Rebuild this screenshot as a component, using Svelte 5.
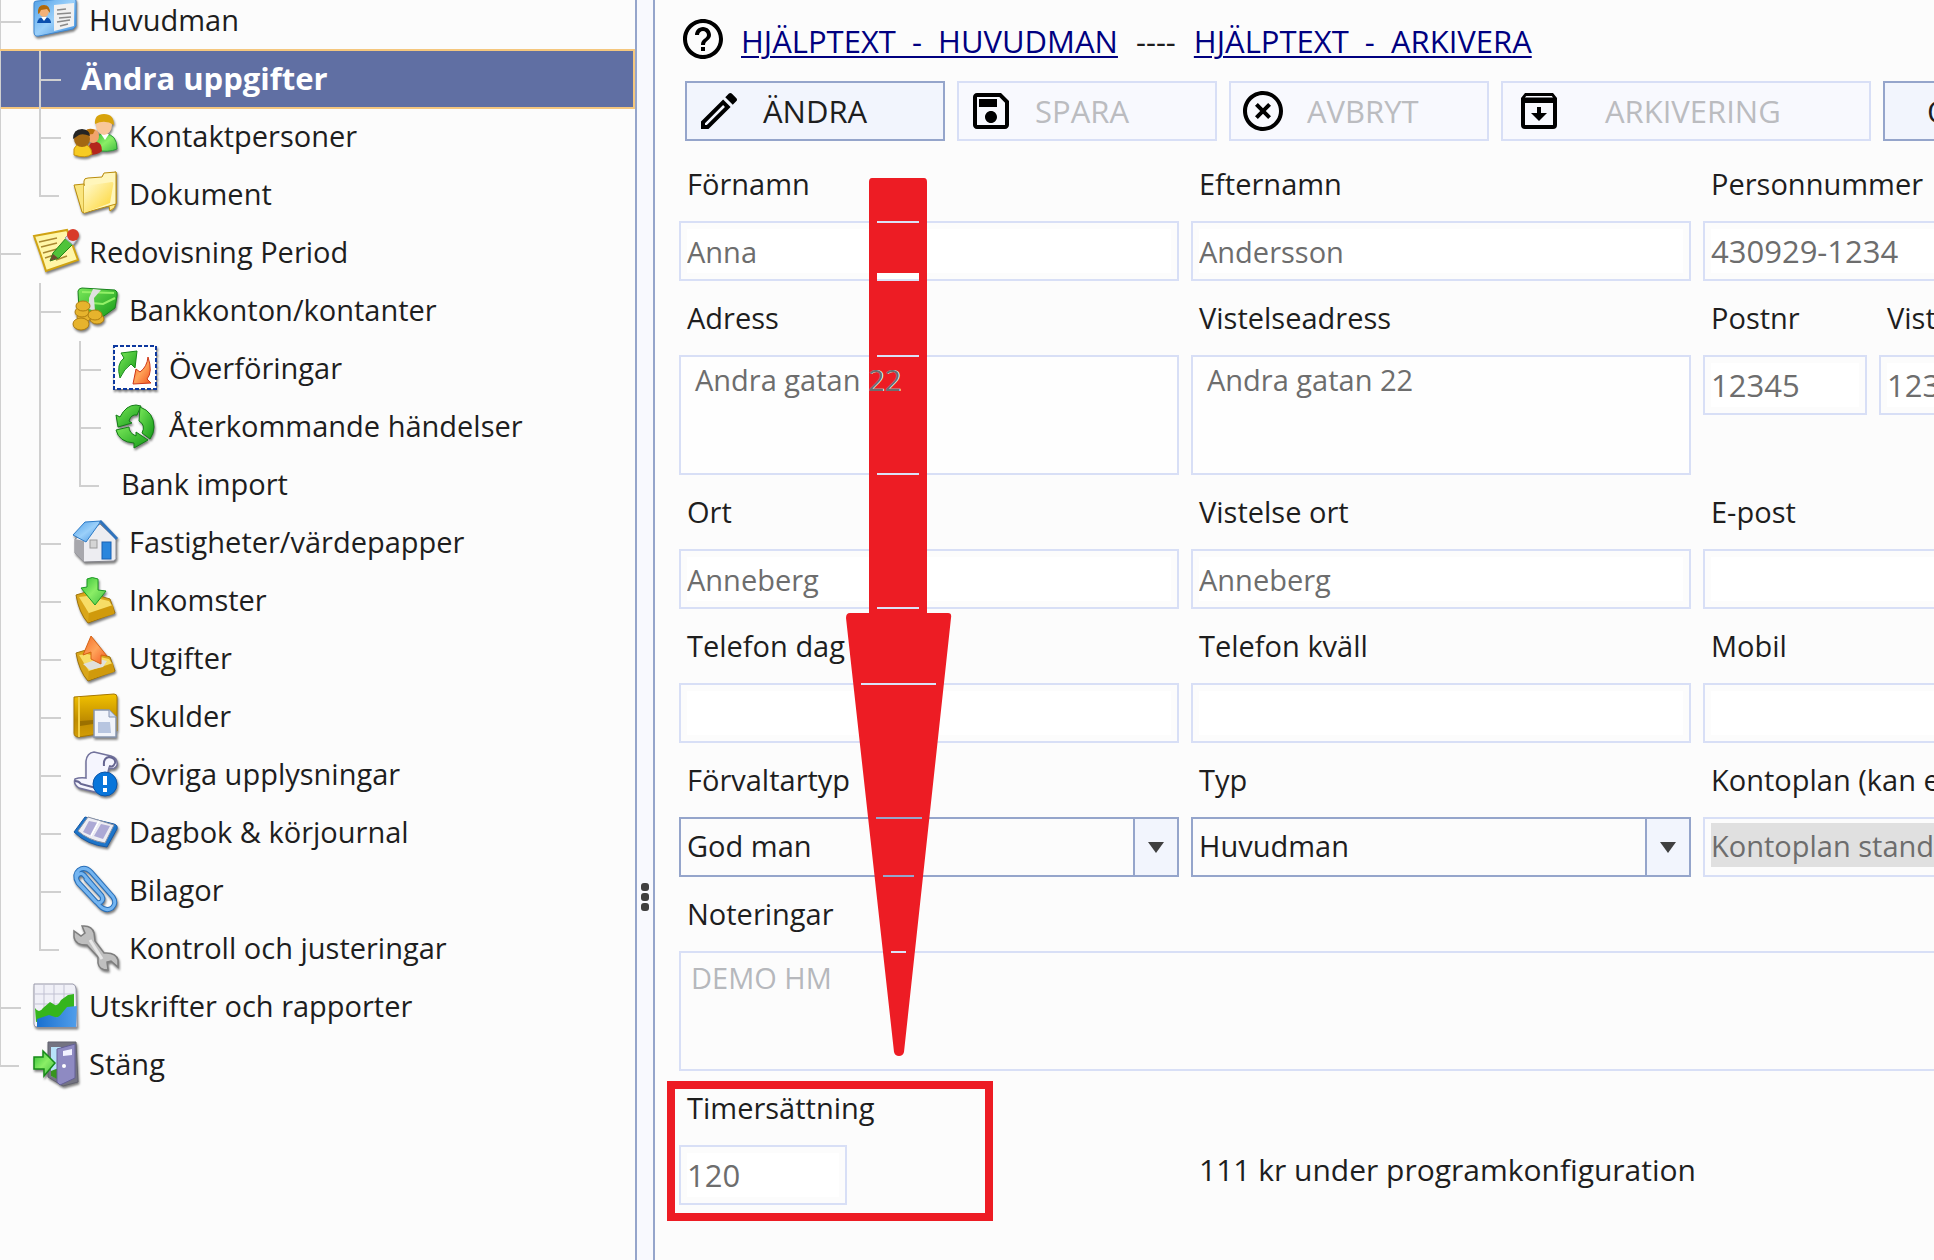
<script lang="ts">
  type Item = { text: string; guides: string[]; icon?: string; selected?: boolean };

  // guides: p = line passing through, t = branch, e = last branch
  const items: Item[] = [
    { text: 'Huvudman', guides: ['t'], icon: 'card' },
    { text: 'Ändra uppgifter', guides: ['p', 't'], selected: true },
    { text: 'Kontaktpersoner', guides: ['p', 't'], icon: 'people' },
    { text: 'Dokument', guides: ['p', 'e'], icon: 'folder' },
    { text: 'Redovisning Period', guides: ['t'], icon: 'note' },
    { text: 'Bankkonton/kontanter', guides: ['p', 't'], icon: 'money' },
    { text: 'Överföringar', guides: ['p', 'p', 't'], icon: 'transfer' },
    { text: 'Återkommande händelser', guides: ['p', 'p', 't'], icon: 'recycle' },
    { text: 'Bank import', guides: ['p', 'p', 'e'] },
    { text: 'Fastigheter/värdepapper', guides: ['p', 't'], icon: 'house' },
    { text: 'Inkomster', guides: ['p', 't'], icon: 'inbox' },
    { text: 'Utgifter', guides: ['p', 't'], icon: 'outbox' },
    { text: 'Skulder', guides: ['p', 't'], icon: 'binder' },
    { text: 'Övriga upplysningar', guides: ['p', 't'], icon: 'scroll' },
    { text: 'Dagbok & körjournal', guides: ['p', 't'], icon: 'book' },
    { text: 'Bilagor', guides: ['p', 't'], icon: 'clip' },
    { text: 'Kontroll och justeringar', guides: ['p', 'e'], icon: 'wrench' },
    { text: 'Utskrifter och rapporter', guides: ['t'], icon: 'chart' },
    { text: 'Stäng', guides: ['e'], icon: 'door' }
  ];
</script>

{#snippet treeIcon(name: string)}
  <svg class="tree-icon" viewBox="0 0 46 46" aria-hidden="true">
    {#if name === 'card'}
      <path d="M1 6Q1 4 4 4L40 1Q43 1 43 4V29L40 32L6 39Q1 40 1 35Z" fill="url(#g-blue)" stroke="#3d86d0" />
      <path d="M21 8L41 6V29L21 34Z" fill="#f1f1f1" />
      <path d="M24 13l9-1M24 17l14-1M26 21l12-1M24 25l13-2M27 29l8-2" stroke="#8a8a8a" stroke-width="1.6" />
      <path d="M4 26q1-6 7-6 6 0 7 5v1z" fill="#0b4fae" />
      <path d="M8 20l3 4 3-4z" fill="#fff" />
      <ellipse cx="11" cy="14" rx="5" ry="6" fill="#f3b178" />
      <path d="M5 17q-1-9 6-9 6 0 6 8l-3-4-6 1q-1 3-3 4z" fill="#b0690c" />
    {:else if name === 'people'}
      <path d="M21 37V28q1-7 11-7 12 0 12 15-8 4-23 1z" fill="url(#g-green2)" stroke="#2b9a3b" />
      <path d="M28 21l4 6 4-6z" fill="#fff" />
      <ellipse cx="31" cy="12" rx="8" ry="10" fill="#f9c79a" />
      <path d="M22 11q-1-10 9-10t10 11q-9-6-19-1z" fill="#d8a30c" />
      <path d="M16 42v-9q2-5 8-4 5 1 5 9-4 4-13 4z" fill="#b3261c" />
      <ellipse cx="20" cy="23" rx="6" ry="7" fill="#f2a46c" />
      <path d="M12 18q4-4 10-1l-2 4-8 1z" fill="#b8730d" />
      <path d="M1 42v-6q2-5 8-5 9 0 10 10-6 5-18 1z" fill="#f7cb22" stroke="#c89208" />
      <ellipse cx="9" cy="26" rx="8" ry="8" fill="#a36712" />
      <path d="M0 26q0-10 9-10 8 1 8 7-7-3-11-1z" fill="#242424" />
    {:else if name === 'folder'}
      <path d="M30 7V4l13-3v31q0 5-6 8z" fill="#ffeb88" stroke="#b98c0c" />
      <path d="M11 10q0-3 4-3l14-1 2-4 12-1v32L11 42z" fill="#fff6bb" stroke="#b98c0c" />
      <path d="M1 14l10-1v29L9 41z" fill="#fae57e" stroke="#b98c0c" />
      <path d="M11 15l28-4q2 0 1 4l-3 17-26 10z" fill="url(#g-yellow)" />
    {:else if name === 'note'}
      <path d="M1 7L34 1L45 31L13 42Q8 26 1 7Z" fill="#fff6a8" stroke="#d0a312" stroke-width="2" />
      <path d="M6 13l18-4M8 18l16-4M10 24l14-4M12 29l9-3M23 31l11-4" stroke="#a98830" stroke-width="1.5" />
      <path d="M17 32l3-8L34 8l7 6L26 29z" fill="#50c33a" stroke="#228518" />
      <path d="M17 32l3-7 5 4z" fill="#6d4b2f" />
      <path d="M32 9l4-4 8 6-4 5z" fill="#d9dde7" stroke="#9a9eac" />
      <ellipse cx="40" cy="6" rx="6" ry="6" fill="#d83a28" />
    {:else if name === 'money'}
      <path d="M5 4q1-3 4-3l33 2q3 1 2 6l-2 12-14 10L6 23z" fill="url(#g-green)" stroke="#19831d" />
      <path d="M9 5l32 1M8 15l22 2 12-6" stroke="#93f067" stroke-width="2" fill="none" />
      <path d="M20 2l8 1-7 8 1 13-6-2V11z" fill="#e0e0e0" />
      <g fill="#e6b32d" stroke="#ad7c10">
        <ellipse cx="11" cy="30" rx="7" ry="5" /><ellipse cx="9" cy="25" rx="7" ry="5" /><ellipse cx="10" cy="19" rx="7" ry="5" />
        <ellipse cx="24" cy="32" rx="7" ry="5" /><ellipse cx="22" cy="28" rx="7" ry="5" /><ellipse cx="8" cy="37" rx="8" ry="6" />
      </g>
    {:else if name === 'transfer'}
      <rect x="1" y="1" width="42" height="43" fill="#fff" stroke="#0d389f" stroke-width="2" stroke-dasharray="4 2" />
      <path d="M7 33q-4-14 4-20L8 8l16-2-2 17-4-4Q11 24 7 33z" fill="url(#g-green)" stroke="#178a19" />
      <path d="M35 12q5 15-1 22l4 4-18 1 3-15 4 3Q34 22 35 12z" fill="url(#g-orange)" stroke="#cf3718" />
    {:else if name === 'recycle'}
      <g fill="url(#g-green)" stroke="#137b17">
        <path d="M3 12l4 2Q13 2 23 2l5 1-4 9q-6-1-8 6l3 2-14 4z" />
        <path d="M27 4q14 5 14 20 0 6-4 12l-8-6q4-8-3-12z" />
        <path d="M3 27l13-3q0 6 7 9v-4l12 8-14 8v-5Q6 39 3 27z" />
      </g>
    {:else if name === 'house'}
      <path d="M2 20v14l9 9 30-1q3-2 2-6V20L27 5z" fill="#ededf1" stroke="#85858c" />
      <path d="M2 20v14l9 9V22z" fill="#a7a7ac" />
      <path d="M0 16L12 3l16-1L13 23z" fill="url(#g-blue)" stroke="#2c7ac6" />
      <path d="M27 2l17 18" stroke="#2f73bd" stroke-width="3" />
      <rect x="17" y="21" width="7" height="8" fill="#d5d5d5" stroke="#9b9b9b" />
      <rect x="29" y="23" width="9" height="17" fill="#2a86dd" stroke="#1861b3" />
    {:else if name === 'inbox' || name === 'outbox'}
      <path d="M3 18l10-3 24 7 5 14-27 10Q6 36 3 18z" fill="#d9a61a" stroke="#9e730b" />
      <path d="M6 20l8-1 22 5 4 6-23 8z" fill="#f7dd67" />
      <path d="M16 36l24-8 1 9-26 8z" fill="#d09a0c" />
      {#if name === 'inbox'}
        <path d="M14 2q5-3 11 0v11l8 1-11 14L8 11l6-1z" fill="url(#g-green2)" stroke="#1d9a25" />
      {:else}
        <path d="M10 29l16-5 8 2-4 6-13 3z" fill="#e0e0dc" />
        <path d="M18 1L34 21l-6-1v9l-10-5V17l-8 3z" fill="url(#g-orange)" stroke="#d66313" />
      {/if}
    {:else if name === 'binder'}
      <path d="M1 4l40-3q3 0 3 3v34l-38 6q-5 0-5-4z" fill="url(#g-gold)" stroke="#a77800" />
      <path d="M6 4v40" stroke="#f3cf45" stroke-width="2" />
      <path d="M7 28l13-1v4L7 33z" fill="#9b7000" />
      <path d="M21 17h15l7 7v20H21z" fill="#f1f4fb" stroke="#8795b0" stroke-width="1.5" />
      <path d="M25 29h12l1 11H25z" fill="#b7c5e0" />
      <path d="M36 17v7h7" fill="#d4dff2" stroke="#8795b0" />
    {:else if name === 'scroll'}
      <path d="M2 28q5-2 11-1V10q1-8 8-9l17 4q7 2 6 9-2 5-8 3l-3 12-3 14-24-6q-6-4-4-9z" fill="#f5f5fe" stroke="#72729c" stroke-width="1.5" />
      <path d="M31 15q-1-8 5-9 7 1 6 6-2 5-6 3M2 30q4 0 6 3l15 4" fill="none" stroke="#656591" stroke-width="2" />
      <circle cx="32" cy="33" r="12" fill="#0875da" stroke="#0b55a8" />
      <path d="M32 25v9M32 37v4" stroke="#fff" stroke-width="4" />
    {:else if name === 'book'}
      <path d="M1 23L12 8l29 7q4 1 3 5l-10 18q-20-2-33-15z" fill="#1d75c9" stroke="#1657a2" />
      <path d="M5 22L15 8l26 8-9 18Q15 31 5 22z" fill="#ededf3" stroke="#8b92a4" />
      <path d="M16 12l10 2-7 13-9-4zM28 15l9 2-7 13-9-3z" fill="#aca9d5" />
      <path d="M26 12l-8 15" stroke="#fff" stroke-width="2" />
    {:else if name === 'clip'}
      <path d="M29 29L11 8q-3-3-6 0-3 3 0 7l22 24q6 6 12 2 5-5 1-11L18 5Q12-1 6 3q-6 5-1 13l18 19q4 2 6-1 2-3-1-6L13 12" fill="none" stroke="#286fb9" stroke-width="5" stroke-linecap="round" />
      <path d="M29 29L11 8q-3-3-6 0-3 3 0 7l22 24q6 6 12 2 5-5 1-11L18 5Q12-1 6 3q-6 5-1 13l18 19q4 2 6-1 2-3-1-6L13 12" fill="none" stroke="#74b5f1" stroke-width="3" stroke-linecap="round" />
    {:else if name === 'wrench'}
      <path d="M9 1q10-1 12 7l1 8 9 12q12-1 14 7v7l-7-6-4 1 1 8q-9 0-10-7v-6L14 20Q2 20 1 12V6l7 5 4-3z" fill="#bfbfbf" stroke="#7e7e7e" stroke-width="1.5" />
      <path d="M17 15l12 19" stroke="#e7e7e7" stroke-width="3" />
    {:else if name === 'chart'}
      <path d="M1 1h39q3 1 3 5l1 38H4q-3 0-3-3z" fill="#f0f0f7" stroke="#9a9aab" />
      <path d="M2 11h39M2 21h39M11 2v37M21 2v37M31 2v37" stroke="#c1c1d2" />
      <path d="M2 25q4 6 8 0l7-6 5 3q3 1 6-5l7-5 6-1v20L3 39z" fill="#35b51d" />
      <path d="M4 36l6-2 6-2 6 2q4 1 7-4l5-6 10-1-1 21H4z" fill="url(#g-blue2)" />
    {:else if name === 'door'}
      <path d="M15 1h28l2 40-15 4-15-9z" fill="#747482" stroke="#62626e" />
      <path d="M18 6h10v33l-10-4z" fill="#b8e3fa" />
      <path d="M18 30l10-4v14l-10-5z" fill="#37941e" />
      <path d="M24 8l18-5v34L27 44l-3-3z" fill="#8e8ac2" stroke="#646097" />
      <path d="M30 10l9-2v6l-9 1z" fill="#f2f2ff" />
      <circle cx="31" cy="25" r="2" fill="#fff" />
      <path d="M1 16h9v-6l12 12-11 13v-7H1z" fill="url(#g-green2)" stroke="#178a19" stroke-width="1.5" />
    {/if}
  </svg>
{/snippet}

<svg class="defs" width="0" height="0" aria-hidden="true">
  <defs>
    <linearGradient id="g-blue" x2="1" y2="1"><stop stop-color="#4f9fe6" /><stop offset=".5" stop-color="#9bd0fa" /><stop offset="1" stop-color="#3c8cdc" /></linearGradient>
    <linearGradient id="g-blue2" x2="1" y2="0"><stop stop-color="#1a70cf" /><stop offset="1" stop-color="#519eea" /></linearGradient>
    <linearGradient id="g-green" x2="1" y2="1"><stop stop-color="#7ae85a" /><stop offset="1" stop-color="#149a18" /></linearGradient>
    <linearGradient id="g-green2" x2="1" y2="1"><stop stop-color="#2fbd36" /><stop offset=".5" stop-color="#8bee66" /><stop offset="1" stop-color="#41bd41" /></linearGradient>
    <linearGradient id="g-orange" x2="1" y2="1"><stop stop-color="#f26a25" /><stop offset=".5" stop-color="#ffa45a" /><stop offset="1" stop-color="#f2551f" /></linearGradient>
    <linearGradient id="g-yellow" x2="1" y2="1"><stop stop-color="#fffbd2" /><stop offset="1" stop-color="#fdd32c" /></linearGradient>
    <linearGradient id="g-gold" x2="0" y2="1"><stop stop-color="#f2c200" /><stop offset=".6" stop-color="#c08d00" /><stop offset="1" stop-color="#d29c07" /></linearGradient>
  </defs>
</svg>

<div class="app">
  <nav class="sidebar" aria-label="Meny">
    <ul>
      {#each items as item}
        <li>
          <a href="#top" class="row" class:selected={item.selected}>
            {#each item.guides as g}<span class="guide {g}"></span>{/each}
            <span class="item" class:plain={!item.icon}>
              {#if item.icon}{@render treeIcon(item.icon)}{/if}
              <span>{item.text}</span>
            </span>
          </a>
        </li>
      {/each}
    </ul>
  </nav>

  <div class="splitter"><i></i><i></i><i></i></div>

  <main>
    <div class="help">
      <svg class="mi" viewBox="0 0 24 24" aria-hidden="true"><path d="M11 18h2v-2h-2v2zm1-16C6.48 2 2 6.48 2 12s4.48 10 10 10 10-4.48 10-10S17.52 2 12 2zm0 18c-4.41 0-8-3.59-8-8s3.59-8 8-8 8 3.59 8 8-3.59 8-8 8zm0-14c-2.21 0-4 1.79-4 4h2c0-1.1.9-2 2-2s2 .9 2 2c0 2-3 1.75-3 5h2c0-2.25 3-2.5 3-5 0-2.21-1.79-4-4-4z" /></svg>
      <p><a href="#huvudman">HJÄLPTEXT&nbsp; -&nbsp; HUVUDMAN</a><span class="dashes">----</span><a href="#arkivera">HJÄLPTEXT&nbsp; -&nbsp; ARKIVERA</a></p>
    </div>

    <div class="toolbar">
      <button type="button">
        <svg class="mi" viewBox="0 0 24 24" aria-hidden="true"><path d="M14.06 9.02l.92.92L5.92 19H5v-.92l9.06-9.06M17.66 3c-.25 0-.51.1-.7.29l-1.83 1.83 3.75 3.75 1.83-1.83c.39-.39.39-1.02 0-1.41l-2.34-2.34c-.2-.2-.45-.29-.71-.29zm-3.6 3.19L3 17.25V21h3.75L17.81 9.94l-3.75-3.75z" /></svg>
        <span>ÄNDRA</span>
      </button>
      <button type="button" disabled>
        <svg class="mi" viewBox="0 0 24 24" aria-hidden="true"><path d="M17 3H5c-1.11 0-2 .9-2 2v14c0 1.1.89 2 2 2h14c1.1 0 2-.9 2-2V7l-4-4zm2 16H5V5h11.17L19 7.83V19zm-7-7c-1.66 0-3 1.34-3 3s1.34 3 3 3 3-1.34 3-3-1.34-3-3-3zM6 6h9v4H6z" /></svg>
        <span>SPARA</span>
      </button>
      <button type="button" disabled>
        <svg class="mi" viewBox="0 0 24 24" aria-hidden="true"><path d="M14.59 8L12 10.59 9.41 8 8 9.41 10.59 12 8 14.59 9.41 16 12 13.41 14.59 16 16 14.59 13.41 12 16 9.41 14.59 8zM12 2C6.47 2 2 6.47 2 12s4.47 10 10 10 10-4.47 10-10S17.53 2 12 2zm0 18c-4.41 0-8-3.59-8-8s3.59-8 8-8 8 3.59 8 8-3.59 8-8 8z" /></svg>
        <span>AVBRYT</span>
      </button>
      <button type="button" class="wide" disabled>
        <svg class="mi" viewBox="0 0 24 24" aria-hidden="true"><path fill-rule="evenodd" d="M5 3h14l2 2.500V19a2 2 0 0 1-2 2H5a2 2 0 0 1-2-2V5.500zM5.600 4.500L5 5.300h14l-.6-.8zM5 8v11h14V8zM11 10h2v3h3l-4 4-4-4h3z" /></svg>
        <span>ARKIVERING</span>
      </button>
      <button type="button" class="open"><span>ÖPPNA</span></button>
    </div>

    <form onsubmit={(e) => e.preventDefault()}>
      <div class="field"><label for="fornamn">Förnamn</label><input id="fornamn" value="Anna" disabled /></div>
      <div class="field"><label for="efternamn">Efternamn</label><input id="efternamn" value="Andersson" disabled /></div>
      <div class="field"><label for="pnr">Personnummer</label><input id="pnr" class="digits" value="430929-1234" disabled /></div>

      <div class="field"><label for="adress">Adress</label><div class="area"><textarea id="adress" disabled>Andra gatan 22</textarea></div></div>
      <div class="field"><label for="vadress">Vistelseadress</label><div class="area"><textarea id="vadress" disabled>Andra gatan 22</textarea></div></div>
      <div class="pair">
        <div class="field"><label for="postnr">Postnr</label><input id="postnr" class="digits" value="12345" disabled /></div>
        <div class="field"><label for="vpostnr">Vistelse postnr</label><input id="vpostnr" class="digits" value="12345" disabled /></div>
      </div>

      <div class="field"><label for="ort">Ort</label><input id="ort" value="Anneberg" disabled /></div>
      <div class="field"><label for="vort">Vistelse ort</label><input id="vort" value="Anneberg" disabled /></div>
      <div class="field"><label for="epost">E-post</label><input id="epost" type="email" disabled /></div>

      <div class="field"><label for="teldag">Telefon dag</label><input id="teldag" type="tel" disabled /></div>
      <div class="field"><label for="telkvall">Telefon kväll</label><input id="telkvall" type="tel" disabled /></div>
      <div class="field"><label for="mobil">Mobil</label><input id="mobil" type="tel" disabled /></div>

      <div class="field">
        <label for="ftyp">Förvaltartyp</label>
        <div class="combo"><select id="ftyp"><option>God man</option></select><span class="drop"></span></div>
      </div>
      <div class="field">
        <label for="typ">Typ</label>
        <div class="combo"><select id="typ"><option>Huvudman</option></select><span class="drop"></span></div>
      </div>
      <div class="field"><label for="kontoplan">Kontoplan (kan ej ändras)</label><input id="kontoplan" class="grey" value="Kontoplan standard" disabled /></div>

      <div class="field full"><label for="not">Noteringar</label><div class="area faint"><textarea id="not" disabled>DEMO HM</textarea></div></div>

      <div class="field rate"><label for="tim">Timersättning</label><input id="tim" class="digits" value="120" disabled /></div>
      <p class="info">111 kr under programkonfiguration</p>
    </form>

    <svg class="arrow" viewBox="0 0 106 878" aria-hidden="true">
      <path d="M26 0H78Q81 0 81 4V435H102Q106 435 105 440L58 874Q57 878 53 878Q49 878 48 874L0 440Q0 435 4 435H23V4Q23 0 26 0Z" fill="#ed1c24" />
      <g fill="#dbe1f7">
        <path d="M31 43h42v2H31zM31 101h42v2H31zM31 177h42v2H31zM31 295h42v2H31zM31 429h42v2H31zM15 505h75v2H15zM45 773h15v2H45z" />
      </g>
      <path d="M31 95h42v6H31z" fill="#fff" />
      <path d="M30 639h46v2H30zM37 697h31v2H37z" fill="#95a5cb" />
    </svg>
  </main>
</div>

<style>
  :global(body) {
    margin: 0;
    background: #fcfcfc;
    overflow: hidden;
  }
  .defs {
    position: absolute;
  }
  .app {
    display: flex;
    min-height: 100vh;
    font-family: 'Open Sans', 'Noto Sans', sans-serif;
    font-size: 29px;
    line-height: 40px;
    color: #1e1e1e;
    overflow: hidden;
  }
  .sidebar {
    flex: 0 0 635px;
    overflow: hidden;
    border-right: 2px solid #95a5cb;
  }
  ul {
    list-style: none;
    margin: -7px 0 0 -1px;
    padding: 0;
  }
  .row {
    display: flex;
    height: 58px;
    color: inherit;
    text-decoration: none;
    white-space: nowrap;
  }
  .selected {
    position: relative;
    background: #606fa3;
    color: #fff;
    font-size: 31px;
    font-weight: 700;
    box-shadow: 0 -2px #f5c77e, inset 0 -2px #f5c77e, inset -2px 0 #f5c77e;
  }
  .guide {
    flex: 0 0 40px;
    background: linear-gradient(#d0d0d0, #d0d0d0) 0 0 / 2px 100% no-repeat;
  }
  .guide:nth-last-child(2) {
    flex-basis: 34px;
  }
  .guide.t {
    background:
      linear-gradient(#d0d0d0, #d0d0d0) 0 0 / 2px 100% no-repeat,
      linear-gradient(#d0d0d0, #d0d0d0) 0 28px / 22px 2px no-repeat;
  }
  .guide.e {
    background:
      linear-gradient(#d0d0d0, #d0d0d0) 0 0 / 2px 30px no-repeat,
      linear-gradient(#d0d0d0, #d0d0d0) 0 28px / 20px 2px no-repeat;
  }
  .item {
    display: flex;
    align-items: center;
    gap: 10px;
    padding-bottom: 4px;
  }
  .plain {
    padding-left: 8px;
  }
  .tree-icon {
    width: 46px;
    height: 46px;
    overflow: visible;
    filter: drop-shadow(1px 2px 1px rgba(0, 0, 0, 0.5));
  }
  .splitter {
    flex: 0 0 16px;
    display: flex;
    flex-direction: column;
    align-items: center;
    gap: 2px;
    padding-top: 883px;
    box-sizing: border-box;
    background: #f8f9fe;
  }
  .splitter i {
    width: 8px;
    height: 8px;
    border-radius: 3px;
    background: #404040;
  }
  main {
    position: relative;
    flex: 1;
    min-width: 0;
    padding-left: 24px;
    border-left: 2px solid #95a5cb;
    overflow: hidden;
  }
  .mi {
    flex: none;
    width: 48px;
    height: 48px;
    fill: #000;
  }
  .help {
    display: flex;
    align-items: center;
    gap: 14px;
    height: 78px;
    font-size: 31px;
    white-space: nowrap;
  }
  .help p {
    margin: 0;
    padding-top: 4px;
  }
  .help a {
    color: #000080;
    text-decoration-thickness: 2px;
    text-underline-offset: 3px;
  }
  .dashes {
    padding: 0 18px;
  }
  .toolbar {
    display: flex;
    gap: 12px;
    padding: 3px 0 0 6px;
  }
  button {
    flex: 0 0 260px;
    display: flex;
    align-items: center;
    gap: 20px;
    box-sizing: border-box;
    height: 60px;
    padding: 0 8px;
    border: 2px solid #95a5cb;
    background: #f2f5fd;
    color: #1e1e1e;
    font: inherit;
    font-size: 31px;
  }
  button:disabled {
    border-color: #d8dff6;
    background: #f8f9fe;
    color: #bbbcc0;
  }
  .wide {
    flex-basis: 370px;
    gap: 42px;
    padding-left: 12px;
  }
  .open {
    padding-left: 42px;
  }
  form {
    display: grid;
    grid-template-columns: 500px 500px 500px;
    column-gap: 12px;
    padding-top: 6px;
  }
  .field {
    display: flex;
    flex-direction: column;
    min-width: 0;
  }
  .pair {
    display: grid;
    grid-template-columns: 164px 1fr;
    column-gap: 12px;
  }
  .full {
    grid-column: 1 / -1;
  }
  label {
    padding: 17px 0 17px 8px;
    white-space: nowrap;
  }
  input,
  select,
  textarea {
    box-sizing: border-box;
    width: 100%;
    margin: 0;
    border: 2px solid #d8dff6;
    border-radius: 0;
    outline: 0;
    font: inherit;
    color: #6d6d6d;
    opacity: 1;
  }
  input {
    height: 60px;
    padding: 6px;
    background: #fff content-box;
  }
  .digits {
    font-size: 31px;
  }
  .grey {
    padding: 4px 6px 8px;
    background-color: #e0e0e0;
  }
  .area {
    height: 116px;
    border: 2px solid #d8dff6;
    background: #fefefe;
  }
  textarea {
    position: relative;
    z-index: 2;
    display: block;
    height: 116px;
    padding: 3px 14px;
    border: 0;
    background: transparent;
    resize: none;
    text-shadow: 1px 0 #fff;
  }
  .faint {
    background: none;
  }
  .faint textarea {
    padding: 5px 10px;
    color: #b6b8bc;
  }
  .combo {
    display: flex;
    border: 2px solid #95a5cb;
  }
  select {
    flex: 1;
    height: 56px;
    padding: 0 0 2px 6px;
    border: 0;
    appearance: none;
    background: transparent;
    color: #1e1e1e;
  }
  .drop {
    display: grid;
    place-items: center;
    flex: 0 0 42px;
    border-left: 2px solid #95a5cb;
    background: #f2f5fd;
  }
  .drop::before {
    content: '';
    border: 8px solid transparent;
    border-top: 11px solid #404040;
    border-bottom: 0;
  }
  .rate {
    position: relative;
  }
  .rate input {
    width: 168px;
  }
  .rate::after {
    content: '';
    position: absolute;
    inset: 10px 186px -16px -12px;
    border: 8px solid #ed1c24;
    pointer-events: none;
  }
  .info {
    margin: 0;
    padding: 79px 0 0 8px;
    font-size: 30px;
    white-space: nowrap;
  }
  .arrow {
    position: absolute;
    z-index: 1;
    left: 191px;
    top: 178px;
    width: 106px;
    height: 878px;
    pointer-events: none;
  }
</style>
